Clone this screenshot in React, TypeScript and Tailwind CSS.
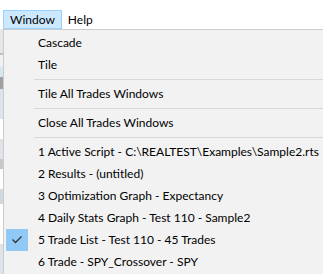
import React from "react";

const Sep = () => (
  <div className="h-[7px] flex items-center pl-[29px]">
    <div className="h-px w-full bg-[#d7d7d7]" />
  </div>
);

const Item = ({ label, checked }: { label: string; checked?: boolean }) => (
  <div className="h-[22px] flex items-center relative">
    {checked && (
      <div className="absolute left-[1px] top-0 w-[22px] h-[22px] bg-[#90c8f6] flex items-center justify-center">
        <svg width="12" height="10" viewBox="0 0 12 10">
          <path d="M1.5 4.5 L4.5 7.5 L10.5 1.5" fill="none" stroke="#333" strokeWidth="1.3" />
        </svg>
      </div>
    )}
    <span className="pl-[33px] whitespace-nowrap">{label}</span>
  </div>
);

export default function App() {
  return (
    <div className="w-[323px] h-[274px] relative overflow-hidden bg-white text-[12px] text-black leading-none font-['Lato',sans-serif]">
      <div className="pt-[10px] flex pl-[3px]">
        <div className="h-[19px] px-[6px] flex items-center bg-[#cce8ff] border border-[#99d1ff]">Window</div>
        <div className="h-[19px] px-[6px] flex items-center">Help</div>
      </div>
      <div className="absolute left-0 top-[29px] w-[3px] h-[245px] flex flex-col">
        <div className="h-[24px] bg-[#e6e6e6]" />
        <div className="h-[2px] bg-[#c0c0c0]" />
        <div className="h-[12px] bg-[#f0f0f0]" />
        <div className="h-[10px] bg-[#d8e6ef]" />
        <div className="h-[12px] bg-[#a0a0a0]" />
        <div className="h-[30px] bg-[#dde3ea]" />
        <div className="h-[20px] bg-[#ffffff]" />
        <div className="h-[20px] bg-[#e0e4ea]" />
        <div className="h-[10px] bg-[#c8c8c8]" />
        <div className="h-[20px] bg-[#ffffff]" />
        <div className="h-[15px] bg-[#d0d8e0]" />
        <div className="h-[40px] bg-[#ffffff]" />
        <div className="flex-1 bg-[#dce3ea]" />
      </div>
      <div className="absolute left-[3px] top-[29px] w-[340px] h-[260px] bg-[#f2f2f2] border-t border-l border-[#cccccc] pt-[2px] pl-[1px]">
        <Item label="Cascade" />
        <Item label="Tile" />
        <Sep />
        <Item label="Tile All Trades Windows" />
        <Sep />
        <Item label="Close All Trades Windows" />
        <Sep />
        <Item label="1 Active Script - C:\REALTEST\Examples\Sample2.rts" />
        <Item label="2 Results - (untitled)" />
        <Item label="3 Optimization Graph - Expectancy" />
        <Item label="4 Daily Stats Graph - Test 110 - Sample2" />
        <Item label="5 Trade List - Test 110 - 45 Trades" checked />
        <Item label="6 Trade - SPY_Crossover - SPY" />
      </div>
    </div>
  );
}
